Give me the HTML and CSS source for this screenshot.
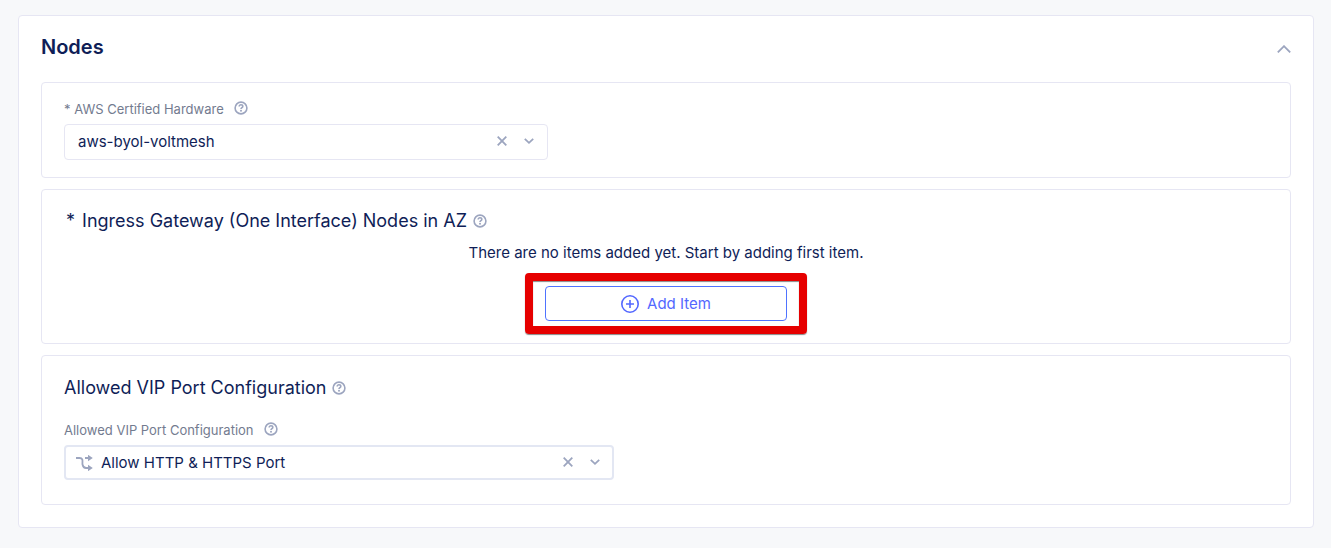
FILE: index.html
```html
<!DOCTYPE html>
<html lang="en">
<head>
<meta charset="utf-8">
<title>Nodes</title>
<meta name="viewport" content="width=device-width, initial-scale=1">
<link rel="stylesheet" href="styles.css">
</head>
<body>
<svg class="sprite" aria-hidden="true">
  <symbol id="help" viewBox="0 0 14 14"><circle cx="7" cy="7" r="5.9" fill="none" stroke="currentColor" stroke-width="1.6"/><path d="M5.2 5.6C5.2 4.4 6 3.8 7 3.8s1.8.6 1.8 1.6C8.8 6.7 7 6.7 7 8.1" fill="none" stroke="currentColor" stroke-width="1.6"/><circle cx="7" cy="9.8" r="1" fill="currentColor"/></symbol>
  <symbol id="clear" viewBox="0 0 10 10"><path d="M.7.7l8.6 8.6M9.3.7L.7 9.3" fill="none" stroke="currentColor" stroke-width="1.8"/></symbol>
  <symbol id="down" viewBox="0 0 10 10"><path d="M.8 2.800L5 6.800l4.200-4" fill="none" stroke="currentColor" stroke-width="1.8"/></symbol>
</svg>
<main class="panel">
  <header class="panel-head">
    <h1 class="panel-title">Nodes</h1>
    <button class="icon-button" type="button" aria-label="Collapse Nodes">
      <svg width="14" height="8" viewBox="0 0 14 8"><path d="M.8 7.4L7 1.200l6.200 6.200" fill="none" stroke="currentColor" stroke-width="1.8"/></svg>
    </button>
  </header>

  <section class="card card-hardware">
    <div class="label-row">
      <label for="hardware">* AWS Certified Hardware</label>
      <button class="icon-button" type="button" aria-label="Help for AWS Certified Hardware"><svg width="14" height="14"><use href="#help"/></svg></button>
    </div>
    <div class="field">
      <select id="hardware" class="field-select"><option>aws-byol-voltmesh</option></select>
      <button class="icon-button" type="button" aria-label="Clear hardware"><svg width="10" height="10"><use href="#clear"/></svg></button>
      <svg class="field-arrow" width="10" height="10" aria-hidden="true"><use href="#down"/></svg>
    </div>
  </section>

  <section class="card card-gateway">
    <div class="title-row">
      <h2 class="card-title"><span class="required">*</span> Ingress Gateway (One Interface) Nodes in AZ</h2>
      <button class="icon-button" type="button" aria-label="Help for Ingress Gateway"><svg width="14" height="14"><use href="#help"/></svg></button>
    </div>
    <p class="empty">There are no items added yet. Start by adding first item.</p>
    <div class="highlight">
      <button class="add-button" type="button">
        <svg width="18" height="18" viewBox="0 0 18 18" aria-hidden="true"><circle cx="9" cy="9" r="8.2" fill="none" stroke="currentColor" stroke-width="1.6"/><path d="M9 5v8M5 9h8" stroke="currentColor" stroke-width="1.6"/></svg>
        Add Item
      </button>
    </div>
  </section>

  <section class="card card-ports">
    <div class="title-row">
      <h2 class="card-title">Allowed VIP Port Configuration</h2>
      <button class="icon-button" type="button" aria-label="Help for Allowed VIP Port Configuration"><svg width="14" height="14"><use href="#help"/></svg></button>
    </div>
    <div class="label-row">
      <label for="ports">Allowed VIP Port Configuration</label>
      <button class="icon-button" type="button" aria-label="Help for the port choice"><svg width="14" height="14"><use href="#help"/></svg></button>
    </div>
    <div class="field field-choice">
      <svg class="choice-icon" width="17" height="16" viewBox="0 0 17 16" aria-hidden="true"><path d="M0 3h3.500C8 3 6 7 6.500 9.500S8 13 10 13H13M9 3h4" fill="none" stroke="currentColor" stroke-width="1.8"/><path d="M12 -.2l4.800 3.200L12 6.200zM12 9.800l4.800 3.200-4.800 3.200z" fill="currentColor"/></svg>
      <select id="ports" class="field-select"><option>Allow HTTP &amp; HTTPS Port</option></select>
      <button class="icon-button" type="button" aria-label="Clear port choice"><svg width="10" height="10"><use href="#clear"/></svg></button>
      <svg class="field-arrow" width="10" height="10" aria-hidden="true"><use href="#down"/></svg>
    </div>
  </section>
</main>
</body>
</html>
```

FILE: styles.css
```css
* {
  box-sizing: border-box;
}

body {
  margin: 0;
  padding: 15px 17px 20px 18px;
  background: #f7f8fa;
  color: #0f1e57;
  font-family: Inter, "Liberation Sans", sans-serif;
  font-size: 15px;
  font-weight: 400;
  line-height: 20px;
}

.sprite {
  position: absolute;
  width: 0;
  height: 0;
}

h1, h2, p {
  margin: 0;
}

button, select {
  margin: 0;
  padding: 0;
  border: 0;
  background: none;
  color: inherit;
  font: inherit;
}

svg {
  display: block;
}

.panel {
  display: flex;
  flex-direction: column;
  gap: 11px;
  padding: 19px 22px 22px;
  border: 1px solid #e6e6f3;
  border-radius: 4px;
  background: #fff;
}

.panel-head {
  display: flex;
  align-items: center;
  justify-content: space-between;
  height: 24px;
  margin-bottom: 12px;
}

.panel-head .icon-button {
  padding: 4px 0 0;
}

.panel-title {
  font-size: 20px;
  font-weight: 600;
  line-height: 24px;
}

.icon-button {
  flex: none;
  color: #9ca5bf;
  cursor: pointer;
}

.card {
  border: 1px solid #e6e6f3;
  border-radius: 4px;
}

.card-hardware {
  padding: 16px 22px 17px;
}

.card-gateway {
  padding: 21px 22px 9px;
}

.card-ports {
  padding: 22px 22px 24px;
}

.label-row {
  display: flex;
  align-items: center;
  gap: 10px;
  height: 20px;
  margin-bottom: 5px;
  color: #737b8f;
  font-size: 13px;
}

.label-row .icon-button {
  padding-bottom: 2px;
}

.title-row {
  display: flex;
  align-items: center;
  gap: 6px;
}

.card-ports .title-row {
  margin-bottom: 22px;
}

.card-title {
  font-size: 18px;
  font-weight: 400;
  line-height: 20px;
}

.required {
  margin: 0 2px;
}

.field {
  display: flex;
  align-items: center;
  gap: 17px;
  max-width: 484px;
  height: 36px;
  padding: 0 13px;
  border: 1px solid #e6e6f3;
  border-radius: 4px;
}

.field-select {
  flex: 1;
  min-width: 0;
  appearance: none;
}

.field .icon-button,
.field-arrow {
  margin-bottom: 2px;
}

.field-arrow {
  color: #9ca5bf;
  pointer-events: none;
}

.field-choice {
  max-width: 550px;
  height: 35px;
  padding: 0 12px 0 10px;
  border: 2px solid #e3e7f3;
}

.choice-icon {
  flex: none;
  margin-right: -9px;
  color: #9ca5bf;
}

.empty {
  margin: 12px 0 10px;
  text-align: center;
}

.highlight {
  width: 282px;
  max-width: 100%;
  margin: 0 auto;
  padding: 5px 12px;
  border: 8px solid #e60000;
  border-radius: 4px;
  box-shadow: 0 1px 1px #888, inset 0 1px 1px #888;
}

.add-button {
  display: flex;
  align-items: center;
  justify-content: center;
  gap: 8px;
  width: 100%;
  height: 35px;
  border: 1px solid #4f73ff;
  border-radius: 4px;
  color: #5468ff;
  cursor: pointer;
}
```
